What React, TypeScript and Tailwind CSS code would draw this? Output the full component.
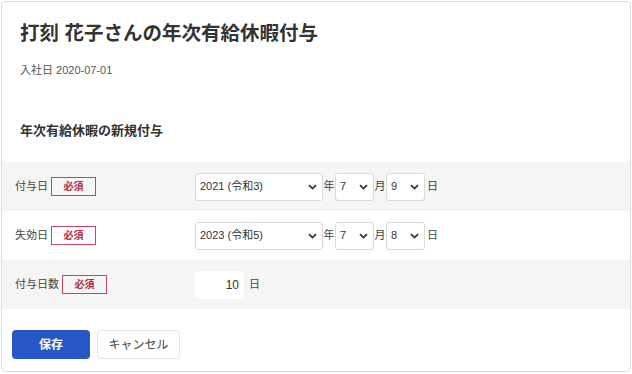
import React from 'react'

const FONT = '"Liberation Sans", "Noto Sans CJK JP", sans-serif'

function Chevron() {
  return (
    <svg width="9" height="6" viewBox="0 0 9 6" className="shrink-0">
      <path d="M1 1.2 L4.5 4.6 L8 1.2" fill="none" stroke="#333" strokeWidth="1.8" />
    </svg>
  )
}

function Select({ value, width }: { value: string; width: string }) {
  return (
    <div className={`${width} h-[28px] flex items-center justify-between pl-[4px] pr-[5px] bg-white border border-[#d9d9d9] rounded-[3px] text-[11px] text-[#333]`}>
      <span>{value}</span>
      <Chevron />
    </div>
  )
}

function Badge() {
  return (
    <span className="ml-[3px] w-[45px] h-[19px] flex items-center justify-center border border-[#c9465f] text-[#b52a44] text-[10px] font-bold">
      必須
    </span>
  )
}

function Unit({ children }: { children: React.ReactNode }) {
  return <span className="w-[12px] text-center text-[11px] text-[#444]">{children}</span>
}

function Row({ label, gray, children }: { label: string; gray?: boolean; children: React.ReactNode }) {
  return (
    <div className={`h-[49px] flex items-center ${gray ? 'bg-[#f5f5f5]' : 'bg-white'}`}>
      <div className="w-[193px] pl-[13px] flex items-center">
        <span className="text-[11px] text-[#444]">{label}</span>
        <Badge />
      </div>
      <div className="flex items-center">{children}</div>
    </div>
  )
}

export default function App() {
  return (
    <div className="w-[632px] h-[374px] bg-white pt-[1px] pl-[1px]" style={{ fontFamily: FONT }}>
      <div className="w-[630px] h-[371px] border border-[#dcdcdc] rounded-[4px] bg-white overflow-hidden">
        <div className="pt-[17px] px-[18px]">
          <h1 className="text-[19.5px] leading-[28px] font-bold text-[#333]">打刻 花子さんの年次有給休暇付与</h1>
          <p className="mt-[14px] text-[11px] leading-[18px] text-[#555]">入社日 2020-07-01</p>
          <h2 className="mt-[42px] text-[13px] leading-[20px] font-bold text-[#333]">年次有給休暇の新規付与</h2>
        </div>

        <div className="mt-[21px]">
          <Row label="付与日" gray>
            <Select value="2021 (令和3)" width="w-[128px]" />
            <Unit>年</Unit>
            <Select value="7" width="w-[39px]" />
            <Unit>月</Unit>
            <Select value="9" width="w-[39px]" />
            <span className="pl-[2px] text-[11px] text-[#444]">日</span>
          </Row>
          <Row label="失効日">
            <Select value="2023 (令和5)" width="w-[128px]" />
            <Unit>年</Unit>
            <Select value="7" width="w-[39px]" />
            <Unit>月</Unit>
            <Select value="8" width="w-[39px]" />
            <span className="pl-[2px] text-[11px] text-[#444]">日</span>
          </Row>
          <Row label="付与日数" gray>
            <div className="w-[49px] h-[28px] flex items-center justify-end pr-[5px] bg-white rounded-[4px] text-[12px] text-[#333]">
              10
            </div>
            <span className="pl-[5px] text-[11px] text-[#444]">日</span>
          </Row>
        </div>

        <div className="mt-[21px] pl-[10px] flex gap-[7px]">
          <button className="w-[78px] h-[29px] rounded-[4px] bg-[#2558c6] text-white text-[12px] font-bold">保存</button>
          <button className="w-[83px] h-[29px] rounded-[4px] bg-white border border-[#e3e3e3] text-[#444] text-[12px]">キャンセル</button>
        </div>
      </div>
    </div>
  )
}
